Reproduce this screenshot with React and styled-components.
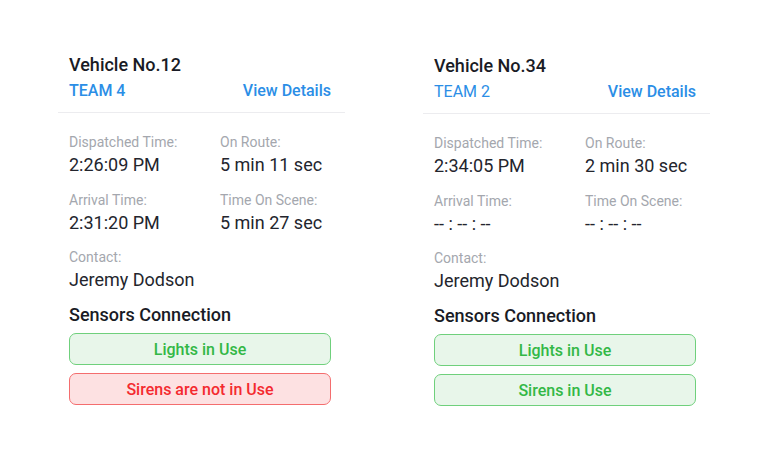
import React from "react";
import styled, { createGlobalStyle } from "styled-components";

const Global = createGlobalStyle`
  html, body { margin: 0; padding: 0; background: #ffffff; }
  body { font-family: Roboto, "Noto Sans", sans-serif; -webkit-font-smoothing: antialiased; }
`;

const Page = styled.div`
  display: flex;
  align-items: flex-start;
  gap: 78px;
  padding: 53px 0 0 58px;
  width: 762px;
  height: 457px;
  box-sizing: border-box;
`;

const Card = styled.div`
  width: 287px;
  margin-top: ${(p) => p.$shift || 0}px;
  display: flex;
  flex-direction: column;
`;

const Header = styled.div`
  padding: 0 14px 11px 11px;
  border-bottom: 1px solid #ececef;
`;

const Title = styled.div`
  font-size: 18px;
  line-height: 24px;
  font-weight: 500;
  color: #191b25;
`;

const TeamRow = styled.div`
  margin-top: 4px;
  display: flex;
  justify-content: space-between;
  font-size: 16px;
  line-height: 20px;
  color: #2b8ee6;
`;

const Team = styled.span`
  font-weight: ${(p) => (p.$strong ? 500 : 400)};
`;

const Body = styled.div`
  padding: 20px 14px 0 11px;
`;

const Grid = styled.div`
  display: grid;
  grid-template-columns: 151px 1fr;
  row-gap: 13.5px;
`;

const Field = styled.div`
  display: flex;
  flex-direction: column;
  gap: 2px;
`;

const Label = styled.div`
  font-size: 14px;
  line-height: 18px;
  color: #a4a7ae;
`;

const Value = styled.div`
  font-size: 18px;
  line-height: 24px;
  color: #23252d;
  white-space: nowrap;
`;

const SectionTitle = styled.div`
  margin-top: 11px;
  font-size: 18px;
  line-height: 24px;
  font-weight: 500;
  color: #191b25;
`;

const Sensors = styled.div`
  margin-top: 6px;
  display: flex;
  flex-direction: column;
  gap: 8px;
`;

const Status = styled.div`
  height: 32px;
  box-sizing: border-box;
  border-radius: 7px;
  display: flex;
  align-items: center;
  justify-content: center;
  font-size: 16px;
  font-weight: 500;
  border: 1.5px solid ${(p) => (p.$ok ? "#6fd07c" : "#f46d6e")};
  background: ${(p) => (p.$ok ? "#e8f6ea" : "#fde1e2")};
  color: ${(p) => (p.$ok ? "#33b846" : "#f42a2f")};
`;

const vehicles = [
  {
    title: "Vehicle No.12",
    team: "TEAM 4",
    strong: true,
    shift: 0,
    dispatched: "2:26:09 PM",
    route: "5 min 11 sec",
    arrival: "2:31:20 PM",
    scene: "5 min 27 sec",
    contact: "Jeremy Dodson",
    sensors: [
      { text: "Lights in Use", ok: true },
      { text: "Sirens are not in Use", ok: false },
    ],
  },
  {
    title: "Vehicle No.34",
    team: "TEAM 2",
    strong: false,
    shift: 1,
    dispatched: "2:34:05 PM",
    route: "2 min 30 sec",
    arrival: "-- : -- : --",
    scene: "-- : -- : --",
    contact: "Jeremy Dodson",
    sensors: [
      { text: "Lights in Use", ok: true },
      { text: "Sirens in Use", ok: true },
    ],
  },
];

function VehicleCard({ v }) {
  return (
    <Card $shift={v.shift}>
      <Header>
        <Title>{v.title}</Title>
        <TeamRow>
          <Team $strong={v.strong}>{v.team}</Team>
          <Team $strong>View Details</Team>
        </TeamRow>
      </Header>
      <Body>
        <Grid>
          <Field>
            <Label>Dispatched Time:</Label>
            <Value>{v.dispatched}</Value>
          </Field>
          <Field>
            <Label>On Route:</Label>
            <Value>{v.route}</Value>
          </Field>
          <Field>
            <Label>Arrival Time:</Label>
            <Value>{v.arrival}</Value>
          </Field>
          <Field>
            <Label>Time On Scene:</Label>
            <Value>{v.scene}</Value>
          </Field>
          <Field>
            <Label>Contact:</Label>
            <Value>{v.contact}</Value>
          </Field>
        </Grid>
        <SectionTitle>Sensors Connection</SectionTitle>
        <Sensors>
          {v.sensors.map((s) => (
            <Status key={s.text} $ok={s.ok}>
              {s.text}
            </Status>
          ))}
        </Sensors>
      </Body>
    </Card>
  );
}

export default function App() {
  return (
    <>
      <Global />
      <Page>
        {vehicles.map((v) => (
          <VehicleCard key={v.title} v={v} />
        ))}
      </Page>
    </>
  );
}
